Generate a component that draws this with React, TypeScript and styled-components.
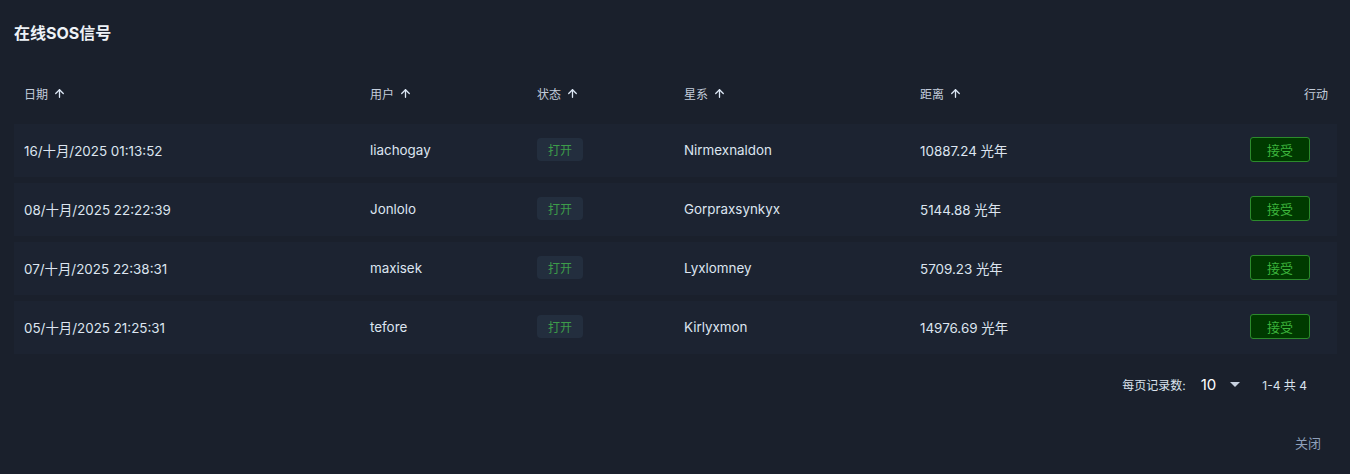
import React from 'react';
import styled, { createGlobalStyle } from 'styled-components';
import { ArrowUp } from 'lucide-react';

const GlobalStyle = createGlobalStyle`
  html, body {
    margin: 0;
    padding: 0;
    background: #1a202c;
  }
  body {
    font-family: Inter, "Noto Sans CJK SC", sans-serif;
    color: #dbe3ee;
  }
`;

const Dialog = styled.div`
  min-height: 474px;
  box-sizing: border-box;
  padding: 21px 13px 0 14px;
  background: #1a202c;
`;

const Title = styled.h2`
  margin: 0;
  font-size: 16px;
  line-height: 24px;
  font-weight: 700;
  color: #eef2f7;
`;

const cols = '346px 167px 147px 236px 1fr auto';

const HeaderRow = styled.div`
  display: grid;
  grid-template-columns: ${cols};
  align-items: center;
  height: 48px;
  margin-top: 24px;
  padding: 0 9px 0 10px;
`;

const HeadCell = styled.div<{ $right?: boolean }>`
  display: flex;
  align-items: center;
  justify-content: ${p => (p.$right ? 'flex-end' : 'flex-start')};
  gap: 5px;
  font-size: 12px;
  color: #c3cddb;
  svg {
    color: #dde7f5;
  }
`;

const Rows = styled.div`
  display: flex;
  flex-direction: column;
  gap: 6px;
  margin-top: 7px;
`;

const Row = styled.div`
  display: grid;
  grid-template-columns: ${cols};
  align-items: center;
  height: 53px;
  box-sizing: border-box;
  padding: 0 27px 2px 10px;
  background: #1c2331;
  font-size: 13.4px;
  font-weight: 400;
  color: #dde5f0;
`;

const Status = styled.span`
  display: inline-flex;
  align-items: center;
  justify-content: center;
  width: 46px;
  height: 23px;
  border-radius: 4px;
  background: #232e3e;
  color: #3d9c4a;
  font-size: 12px;
`;

const ActionCell = styled.div`
  display: flex;
  justify-content: flex-end;
`;

const AcceptButton = styled.button`
  width: 60px;
  height: 25px;
  padding: 0;
  border: 1px solid #2c8a2c;
  border-radius: 3px;
  background: #003a00;
  color: #3cb43c;
  font-family: inherit;
  font-size: 13px;
  cursor: pointer;
`;

const Pagination = styled.div`
  display: flex;
  align-items: center;
  justify-content: flex-end;
  height: 52px;
  margin-top: 4px;
  padding-right: 30px;
  font-size: 12px;
  color: #dbe3ee;
`;

const PerPage = styled.div`
  display: flex;
  align-items: center;
  margin-right: 22px;
`;

const PageSize = styled.span`
  margin-left: 15px;
  font-size: 15px;
  color: #ffffff;
`;

const Caret = styled.span`
  width: 0;
  height: 0;
  margin-left: 14px;
  border-left: 5px solid transparent;
  border-right: 5px solid transparent;
  border-top: 5px solid #c8d2e0;
`;

const Footer = styled.div`
  display: flex;
  justify-content: flex-end;
  margin-top: 23px;
  padding-right: 16px;
`;

const CloseButton = styled.button`
  padding: 0;
  border: none;
  background: transparent;
  color: #8fa0bb;
  font-family: inherit;
  font-size: 13px;
  cursor: pointer;
`;

type Signal = {
  date: string;
  user: string;
  system: string;
  distance: string;
};

const signals: Signal[] = [
  { date: '16/十月/2025 01:13:52', user: 'liachogay', system: 'Nirmexnaldon', distance: '10887.24 光年' },
  { date: '08/十月/2025 22:22:39', user: 'Jonlolo', system: 'Gorpraxsynkyx', distance: '5144.88 光年' },
  { date: '07/十月/2025 22:38:31', user: 'maxisek', system: 'Lyxlomney', distance: '5709.23 光年' },
  { date: '05/十月/2025 21:25:31', user: 'tefore', system: 'Kirlyxmon', distance: '14976.69 光年' },
];

const sortable = ['日期', '用户', '状态', '星系', '距离'];

const App: React.FC = () => {
  return (
    <Dialog>
      <GlobalStyle />
      <Title>在线SOS信号</Title>

      <HeaderRow>
        {sortable.map(label => (
          <HeadCell key={label}>
            {label}
            <ArrowUp size={13} strokeWidth={2.4} />
          </HeadCell>
        ))}
        <HeadCell $right>行动</HeadCell>
      </HeaderRow>

      <Rows>
        {signals.map(s => (
          <Row key={s.date}>
            <div>{s.date}</div>
            <div>{s.user}</div>
            <div>
              <Status>打开</Status>
            </div>
            <div>{s.system}</div>
            <div>{s.distance}</div>
            <ActionCell>
              <AcceptButton>接受</AcceptButton>
            </ActionCell>
          </Row>
        ))}
      </Rows>

      <Pagination>
        <PerPage>
          每页记录数:
          <PageSize>10</PageSize>
          <Caret />
        </PerPage>
        <span>1-4 共 4</span>
      </Pagination>

      <Footer>
        <CloseButton>关闭</CloseButton>
      </Footer>
    </Dialog>
  );
};

export default App;
